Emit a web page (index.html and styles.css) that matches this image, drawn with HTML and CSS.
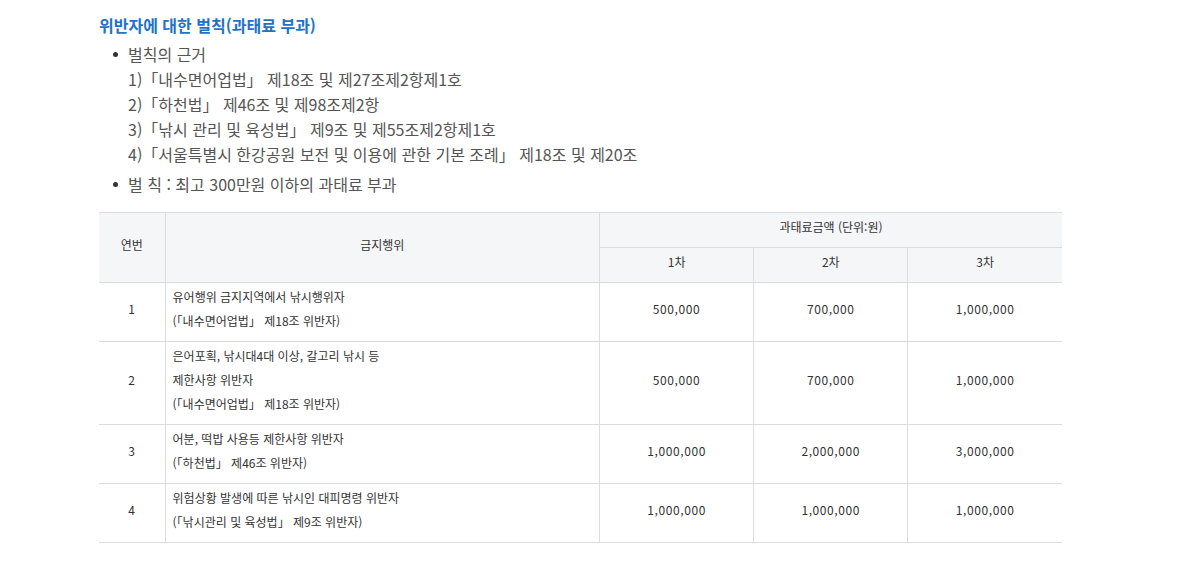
FILE: index.html
```html
<!DOCTYPE html>
<html lang="ko">
<head>
<meta charset="utf-8">
<link rel="stylesheet" href="styles.css">
</head>
<body>
<div class="wrap">
  <h3 class="title">위반자에 대한 벌칙(과태료 부과)</h3>
  <ul class="list">
    <li>벌칙의 근거
      <div class="sub">1)「내수면어업법」 제18조 및 제27조제2항제1호</div>
      <div class="sub">2)「하천법」 제46조 및 제98조제2항</div>
      <div class="sub">3)「낚시 관리 및 육성법」 제9조 및 제55조제2항제1호</div>
      <div class="sub">4)「서울특별시 한강공원 보전 및 이용에 관한 기본 조례」 제18조 및 제20조</div>
    </li>
    <li class="gap">벌 칙 : 최고 300만원 이하의 과태료 부과</li>
  </ul>
  <table class="tbl">
    <colgroup>
      <col class="c1"><col class="c2"><col class="c3"><col class="c3"><col class="c3">
    </colgroup>
    <thead>
      <tr>
        <th rowspan="2" class="first">연번</th>
        <th rowspan="2">금지행위</th>
        <th colspan="3" class="last">과태료금액 (단위:원)</th>
      </tr>
      <tr class="h2">
        <th>1차</th>
        <th>2차</th>
        <th class="last">3차</th>
      </tr>
    </thead>
    <tbody>
      <tr>
        <td class="first num">1</td>
        <td class="left">유어행위 금지지역에서 낚시행위자<br>(「내수면어업법」 제18조 위반자)</td>
        <td class="num">500,000</td><td class="num">700,000</td><td class="num last">1,000,000</td>
      </tr>
      <tr>
        <td class="first num">2</td>
        <td class="left">은어포획, 낚시대4대 이상, 갈고리 낚시 등<br>제한사항 위반자<br>(「내수면어업법」 제18조 위반자)</td>
        <td class="num">500,000</td><td class="num">700,000</td><td class="num last">1,000,000</td>
      </tr>
      <tr>
        <td class="first num">3</td>
        <td class="left">어분, 떡밥 사용등 제한사항 위반자<br>(「하천법」 제46조 위반자)</td>
        <td class="num">1,000,000</td><td class="num">2,000,000</td><td class="num last">3,000,000</td>
      </tr>
      <tr>
        <td class="first num">4</td>
        <td class="left">위험상황 발생에 따른 낚시인 대피명령 위반자<br>(「낚시관리 및 육성법」 제9조 위반자)</td>
        <td class="num">1,000,000</td><td class="num">1,000,000</td><td class="num last">1,000,000</td>
      </tr>
    </tbody>
  </table>
</div>
</body>
</html>
```
FILE: styles.css
```css
html, body {
  margin: 0;
  padding: 0;
  background: #fff;
}
body {
  font-family: "Noto Sans CJK KR", "Noto Sans", sans-serif;
  color: #555;
}
.wrap {
  padding: 13px 0 0 99px;
  width: 963px;
}
.title {
  margin: 0;
  font-size: 16px;
  line-height: 24px;
  font-weight: 700;
  color: #1f72c6;
}
.list {
  margin: 5px 0 0 0;
  padding: 0 0 0 29px;
  font-size: 16px;
  line-height: 25px;
  color: #555;
}
.list li {
  list-style: none;
  position: relative;
}
.list li::before {
  content: "";
  position: absolute;
  left: -15px;
  top: 10px;
  width: 5px;
  height: 5px;
  border-radius: 50%;
  background: #333;
}
.list li.gap {
  margin-top: 5px;
}
.tbl {
  margin-top: 15px;
  width: 963px;
  border-collapse: collapse;
  table-layout: fixed;
  border-top: 1px solid #6b6b6b;
  font-size: 12px;
  color: #333;
}
.c1 { width: 66px; }
.c2 { width: 434px; }
.c3 { width: 154px; }
.tbl th {
  background: #f5f6f8;
  font-weight: 400;
  padding: 5px 0 11px;
  line-height: 18px;
  border: 1px solid #dcdcdc;
  text-align: center;
}
.tbl td {
  border: 1px solid #dcdcdc;
  text-align: center;
  line-height: 24px;
  padding: 2px 7px 8px;
}
.tbl td.num {
  letter-spacing: 0.6px;
}
.tbl td.left {
  text-align: left;
}
.tbl .first { border-left: none; }
.tbl .last { border-right: none; }
```
